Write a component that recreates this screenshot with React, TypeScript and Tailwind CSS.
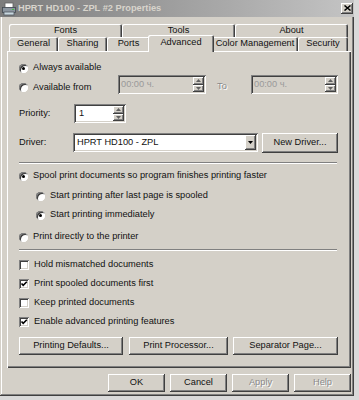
import type { ReactNode } from 'react'

const raised =
  'bg-[#d4d0c8] shadow-[inset_-1px_-1px_#404040,inset_1px_1px_#ffffff,inset_-2px_-2px_#808080]'
const sunken =
  'shadow-[inset_1px_1px_#808080,inset_-1px_-1px_#ffffff,inset_2px_2px_#404040,inset_-2px_-2px_#d4d0c8]'
const disabledText = 'text-[#8a8a8a] [text-shadow:1px_1px_#ffffff]'

function Radio({ checked }: { checked?: boolean }) {
  return (
    <span className="flex size-[9px] shrink-0 items-center justify-center rounded-full bg-white shadow-[inset_1px_1px_#808080,inset_-1px_-1px_#ffffff,inset_2px_2px_#404040]">
      {checked && <span className="size-[3px] rounded-full bg-black" />}
    </span>
  )
}

function Check({ checked }: { checked?: boolean }) {
  return (
    <span className={`flex size-[10px] shrink-0 items-center justify-center bg-white ${sunken}`}>
      {checked && (
        <svg width="10" height="10" viewBox="0 0 10 10">
          <path d="M2.5 4.5 L4.2 6.3 L7.8 2.7" fill="none" stroke="#000" strokeWidth="1.6" />
        </svg>
      )}
    </span>
  )
}

function Option({
  kind,
  checked,
  label,
  indent,
  h = 'h-[16px]',
}: {
  kind: 'radio' | 'check'
  checked?: boolean
  label: string
  indent?: boolean
  h?: string
}) {
  return (
    <div className={`flex items-center gap-[5px] ${h} ${indent ? 'pl-[17px]' : ''}`}>
      {kind === 'radio' ? <Radio checked={checked} /> : <Check checked={checked} />}
      <span>{label}</span>
    </div>
  )
}

function Btn({ w, children, disabled }: { w: string; children: ReactNode; disabled?: boolean }) {
  return (
    <div className={`flex h-[18px] shrink-0 items-center justify-center ${raised} ${w}`}>
      <span className={disabled ? disabledText : ''}>{children}</span>
    </div>
  )
}

function Spinner({ h = 'h-[18px]' }: { h?: string }) {
  return (
    <div className={`flex w-[11px] flex-col ${h}`}>
      {[0, 1].map((i) => (
        <div key={i} className={`flex flex-1 items-center justify-center ${raised}`}>
          <svg width="5" height="3" viewBox="0 0 5 3">
            <path d={i === 0 ? 'M2.5 0 L5 3 L0 3 Z' : 'M0 0 L5 0 L2.5 3 Z'} fill="#606060" />
          </svg>
        </div>
      ))}
    </div>
  )
}

function TimeBox({ w }: { w: string }) {
  return (
    <div className={`flex h-[19px] items-center justify-between bg-[#d4d0c8] p-[2px] pl-[3px] ${sunken} ${w}`}>
      <span className="text-[#9a9a9a]">00:00 ч.</span>
      <Spinner h="h-[15px]" />
    </div>
  )
}

function Tab({ w, label, selected }: { w: string; label: string; selected?: boolean }) {
  return (
    <div
      className={`flex shrink-0 items-center justify-center rounded-t-[2px] bg-[#d4d0c8] shadow-[inset_1px_1px_#ffffff,inset_-1px_0_#404040,inset_-2px_0_#808080] ${w} ${
        selected ? 'relative z-10 -mx-[2px] -mb-px h-[17px] pb-[2px]' : 'h-[14px]'
      }`}
    >
      {label}
    </div>
  )
}

function Separator() {
  return <div className="h-[2px] w-[318px] border-t border-b border-t-[#808080] border-b-white" />
}

export default function App() {
  return (
    <div className="h-[400px] w-[359px] overflow-hidden bg-[#d9d9d9] font-['Liberation_Sans',Arial,sans-serif] text-[9.25px] leading-none text-[#111]">
      <div className="h-[396px] w-[354px] bg-[#d4d0c8] shadow-[inset_-1px_-1px_#404040,inset_1px_1px_#d4d0c8,inset_-2px_-2px_#808080,inset_2px_2px_#ffffff]">
        {/* title bar */}
        <div className="flex h-[17px] items-center bg-linear-to-r from-[#7c7c7c] to-[#c4c4c4] pr-[1px] pl-[2px]">
          <svg width="14" height="14" viewBox="0 0 14 14" className="shrink-0">
            <rect x="3" y="1" width="8" height="5" fill="#fff" stroke="#606060" strokeWidth="0.8" />
            <rect x="0.5" y="5.5" width="13" height="5" fill="#8c96a0" stroke="#404850" strokeWidth="0.8" />
            <rect x="2" y="10" width="10" height="3" fill="#c8d8e0" stroke="#505860" strokeWidth="0.8" />
            <rect x="10" y="7" width="2" height="1" fill="#40c040" />
          </svg>
          <span className="ml-[2px] font-bold text-[#d8d4cc]">HPRT HD100 - ZPL #2 Properties</span>
          <div className={`mt-[-1px] ml-auto flex h-[11px] w-[12px] items-center justify-center ${raised}`}>
            <svg width="7" height="6" viewBox="0 0 7 6">
              <path d="M0.5 0.5 L6.5 5.5 M6.5 0.5 L0.5 5.5" stroke="#000" strokeWidth="1.5" />
            </svg>
          </div>
        </div>

        <div className="pt-[7px] pl-[7px]">
          {/* tabs */}
          <div className="ml-[2px] flex w-[339px]">
            <Tab w="w-[113px]" label="Fonts" />
            <Tab w="w-[113px]" label="Tools" />
            <Tab w="w-[113px]" label="About" />
          </div>
          <div className="ml-[2px] flex h-[13px] w-[339px] items-end">
            <Tab w="w-[49px]" label="General" />
            <Tab w="w-[49px]" label="Sharing" />
            <Tab w="w-[43px]" label="Ports" />
            <Tab w="w-[66px]" label="Advanced" selected />
            <Tab w="w-[86px]" label="Color Management" />
            <Tab w="w-[50px]" label="Security" />
          </div>

          {/* panel */}
          <div className="flex h-[317px] w-[344px] flex-col px-[12px] pt-[10px] shadow-[inset_1px_1px_#ffffff,inset_-1px_-1px_#404040,inset_-2px_-2px_#808080]">
            <Option kind="radio" checked label="Always available" h="h-[14px]" />
            <div className="flex h-[19px] items-start">
              <div className="flex h-[19px] w-[99px] items-center gap-[5px] pt-[6px]">
                <Radio />
                <span>Available from</span>
              </div>
              <TimeBox w="w-[88px]" />
              <span className={`ml-[11px] w-[34px] pt-[7px] ${disabledText}`}>To</span>
              <TimeBox w="w-[87px]" />
            </div>

            <div className="mt-[10px] flex h-[19px] items-center">
              <span className="w-[55px]">Priority:</span>
              <div className={`flex h-[19px] w-[52px] items-center justify-between bg-white p-[2px] pl-[5px] ${sunken}`}>
                <span>1</span>
                <Spinner h="h-[15px]" />
              </div>
            </div>

            <div className="mt-[10px] flex h-[19px] items-center">
              <span className="w-[54px]">Driver:</span>
              <div className={`flex h-[19px] w-[185px] items-center justify-between bg-white p-[2px] pl-[4px] ${sunken}`}>
                <span>HPRT HD100 - ZPL</span>
                <div className={`flex h-[15px] w-[11px] items-center justify-center ${raised}`}>
                  <svg width="5" height="3" viewBox="0 0 5 3">
                    <path d="M0 0 L5 0 L2.5 3 Z" fill="#000" />
                  </svg>
                </div>
              </div>
              <div className="ml-[4px]">
                <div className={`flex h-[20px] w-[76px] items-center justify-center ${raised}`}>New Driver...</div>
              </div>
            </div>

            <div className="mt-[10px]">
              <Separator />
            </div>

            <div className="mt-[4px]">
              <Option kind="radio" checked label="Spool print documents so program finishes printing faster" />
            </div>
            <div className="mt-[4px]">
              <Option kind="radio" indent label="Start printing after last page is spooled" />
            </div>
            <div className="mt-[3px]">
              <Option kind="radio" indent checked label="Start printing immediately" />
            </div>
            <div className="mt-[6px]">
              <Option kind="radio" label="Print directly to the printer" />
            </div>

            <div className="mt-[4px]">
              <Separator />
            </div>

            <div className="mt-[6px] flex flex-col gap-[3px]">
              <Option kind="check" label="Hold mismatched documents" />
              <Option kind="check" checked label="Print spooled documents first" />
              <Option kind="check" label="Keep printed documents" />
              <Option kind="check" checked label="Enable advanced printing features" />
            </div>

            <div className="mt-[7px] flex gap-[5px]">
              <Btn w="w-[104px]">Printing Defaults...</Btn>
              <div className="ml-[1px]">
                <Btn w="w-[99px]">Print Processor...</Btn>
              </div>
              <Btn w="w-[105px]">Separator Page...</Btn>
            </div>
          </div>

          {/* dialog buttons */}
          <div className="mt-[6px] flex w-[344px] justify-end gap-[5px]">
            <Btn w="w-[57px]">OK</Btn>
            <Btn w="w-[57px]">Cancel</Btn>
            <Btn w="w-[57px]" disabled>
              Apply
            </Btn>
            <Btn w="w-[57px]" disabled>
              Help
            </Btn>
          </div>
        </div>
      </div>
    </div>
  )
}
